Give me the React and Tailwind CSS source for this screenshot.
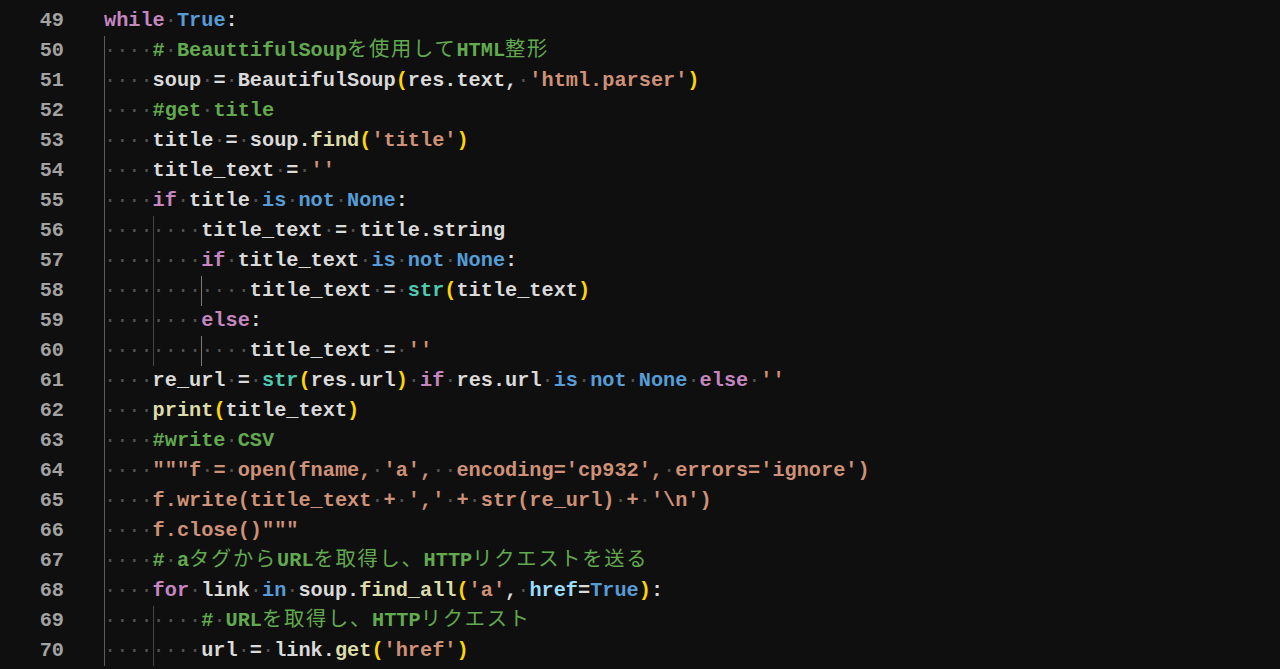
import React from 'react';

const K = 'text-[#c586c0]'; // control keywords
const B = 'text-[#569cd6]'; // constants / operators words
const V = 'text-[#dadada]'; // identifiers
const F = 'text-[#dcdcaa]'; // functions
const T = 'text-[#4ec9b0]'; // builtins
const S = 'text-[#ce9178]'; // strings
const G = 'text-[#62a94f]'; // comments
const P = 'text-[#9cdcfe]'; // params
const Y = 'text-[#ffd700]'; // brackets

const guides = [
  'shadow-[inset_1px_0_0_#5c5c5c]',
  'shadow-[inset_1px_0_0_#464646]',
  'shadow-[inset_1px_0_0_#7a7a7a]',
];

const lines = [
  [49, 0, [[K, 'while'], [V, ' '], [B, 'True'], [V, ':']]],
  [50, 1, [[G, '# BeauttifulSoupを使用してHTML整形']]],
  [51, 1, [[V, 'soup = BeautifulSoup'], [Y, '('], [V, 'res.text, '], [S, "'html.parser'"], [Y, ')']]],
  [52, 1, [[G, '#get title']]],
  [53, 1, [[V, 'title = soup.'], [F, 'find'], [Y, '('], [S, "'title'"], [Y, ')']]],
  [54, 1, [[V, 'title_text = '], [S, "''"]]],
  [55, 1, [[K, 'if'], [V, ' title '], [B, 'is not None'], [V, ':']]],
  [56, 2, [[V, 'title_text = title.string']]],
  [57, 2, [[K, 'if'], [V, ' title_text '], [B, 'is not None'], [V, ':']]],
  [58, 3, [[V, 'title_text = '], [T, 'str'], [Y, '('], [V, 'title_text'], [Y, ')']]],
  [59, 2, [[K, 'else'], [V, ':']]],
  [60, 3, [[V, 'title_text = '], [S, "''"]]],
  [61, 1, [[V, 're_url = '], [T, 'str'], [Y, '('], [V, 'res.url'], [Y, ')'], [V, ' '], [K, 'if'], [V, ' res.url '], [B, 'is not None'], [V, ' '], [K, 'else'], [V, ' '], [S, "''"]]],
  [62, 1, [[F, 'print'], [Y, '('], [V, 'title_text'], [Y, ')']]],
  [63, 1, [[G, '#write CSV']]],
  [64, 1, [[S, `"""f = open(fname, 'a',  encoding='cp932', errors='ignore')`]]],
  [65, 1, [[S, "f.write(title_text + ',' + str(re_url) + '\\n')"]]],
  [66, 1, [[S, 'f.close()"""']]],
  [67, 1, [[G, '# aタグからURLを取得し、HTTPリクエストを送る']]],
  [68, 1, [[K, 'for'], [V, ' link '], [B, 'in'], [V, ' soup.'], [F, 'find_all'], [Y, '('], [S, "'a'"], [V, ', '], [P, 'href'], [V, '='], [B, 'True'], [Y, ')'], [V, ':']]],
  [69, 2, [[G, '# URLを取得し、HTTPリクエスト']]],
  [70, 2, [[V, 'url = link.'], [F, 'get'], [Y, '('], [S, "'href'"], [Y, ')']]],
];

function Seg({ text, cls }) {
  const parts = text.split(/( +|[\u3000-\u30ff\u4e00-\u9fff\uff00-\uffef]+)/).filter(Boolean);
  return parts.map((p, i) => {
    if (p[0] === ' ') return <span key={i} className="text-[#525252] font-normal">{'·'.repeat(p.length)}</span>;
    if (/[\u3000-\u9fff]/.test(p)) return <span key={i} className={cls + ' tracking-[1.75px] font-normal'}>{p}</span>;
    return <span key={i} className={cls}>{p}</span>;
  });
}

export default function App() {
  return (
    <div className="w-[1280px] h-[669px] overflow-hidden bg-[#0f0f0f] pt-[6px] font-['Liberation_Mono','Noto_Sans_CJK_JP',monospace] text-[20.25px] font-bold">
      {lines.map(([num, level, tokens]) => (
        <div key={num} className="flex h-[30px] leading-[30px]">
          <div className="w-[64px] text-right text-[#a2a2a2]">{num}</div>
          <div className="ml-[40px] flex h-full whitespace-pre">
            {Array.from({ length: level }).map((_, i) => (
              <span key={i} className={'inline-block h-[30px] font-normal text-[#525252] ' + guides[i]}>····</span>
            ))}
            <span>
              {tokens.map(([cls, text], i) => (
                <Seg key={i} cls={cls} text={text} />
              ))}
            </span>
          </div>
        </div>
      ))}
    </div>
  );
}
